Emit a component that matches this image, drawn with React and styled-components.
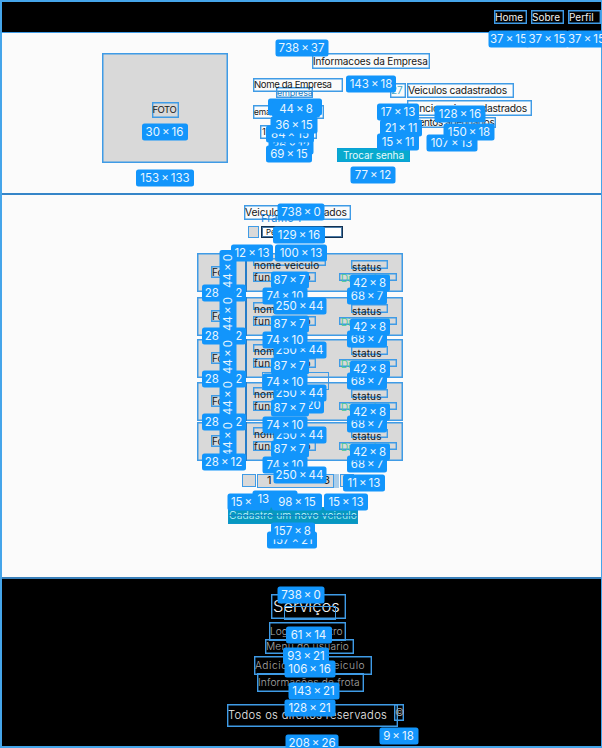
import React from "react";
import styled, { createGlobalStyle } from "styled-components";

const line = "#3f9be6";

const Global = createGlobalStyle`
  * { box-sizing: border-box; }
  body { margin: 0; background: #fbfbfb; font-family: Inter, "Liberation Sans", sans-serif; color: #171717; }
`;

const Page = styled.div`
  position: relative;
  width: 602px;
  height: 748px;
  overflow: hidden;
  background: #fbfbfb;
`;

const PageOutline = styled.div`
  position: absolute;
  inset: 0;
  border: 2px solid #45a5ea;
  border-width: 2px 1.5px 2px 2px;
`;

/* Outlined text layer; $up and $left pull it over its neighbour. */
const Layer = styled.div`
  flex: none;
  width: ${(p) => p.$w}px;
  height: ${(p) => p.$h}px;
  margin-top: ${(p) => p.$up || 0}px;
  margin-left: ${(p) => p.$left || 0}px;
  box-shadow: inset 0 0 0 1.4px ${line};
  padding-left: ${(p) => p.$pad ?? 1}px;
  padding-top: ${(p) => p.$drop || 0}px;
  font-size: ${(p) => p.$size || 10}px;
  font-weight: ${(p) => p.$weight || 400};
  letter-spacing: ${(p) => p.$track || 0}px;
  line-height: ${(p) => p.$h}px;
  white-space: nowrap;
  color: ${(p) => p.$color || "inherit"};
`;

const Nav = styled.nav`
  height: 33px;
  background: #000;
  color: #f2f2f2;
  display: flex;
  justify-content: flex-end;
  gap: 4px;
  padding: 10px 1px 0 0;
  border-bottom: 1px solid ${line};
`;

const Company = styled.section`
  height: 162px;
  display: flex;
  padding: 20px 0 0 102px;
  border-bottom: 2px solid #3585c8;
`;

const Photo = styled.div`
  width: 126px;
  height: 110px;
  background: #d9d9d9;
  box-shadow: inset 0 0 0 1.5px ${line};
  display: flex;
  justify-content: center;
  padding-top: 49px;
`;

const Details = styled.div`
  width: 310px;
  margin-left: 25px;
`;

const Columns = styled.div`
  display: flex;
  height: 79px;
`;

const Column = styled.div`
  width: ${(p) => p.$w}px;
  padding-top: ${(p) => p.$top}px;
`;

const Row = styled.div`
  display: flex;
  gap: 1px;
`;

const PasswordButton = styled.button`
  display: block;
  width: 73px;
  height: 14px;
  margin-left: 84px;
  padding: 0;
  border: 1px solid #0a9fd8;
  background: #08aace;
  color: #e6fbff;
  font: 400 10px/12px Inter, sans-serif;
  letter-spacing: -0.1px;
`;

const Vehicles = styled.section`
  height: 382px;
  display: flex;
  flex-direction: column;
  padding-top: 10px;
`;

const FrameName = styled.span`
  height: 10px;
  margin: -8px 0 0 261px;
  font-size: 11px;
  line-height: 12px;
  color: #2388df;
`;

const Search = styled.div`
  display: flex;
  gap: 2px;
  margin: 4px 0 0 248px;
`;

const Square = styled.span`
  width: ${(p) => p.$w}px;
  height: ${(p) => p.$h}px;
  background: #d9d9d9;
  box-shadow: inset 0 0 0 1px ${line};
`;

const Field = styled.div`
  width: 82px;
  height: 12px;
  border: 1px solid #123152;
  box-shadow: inset 0 0 0 1px #4c7ba6;
  background: #fff;
  padding-left: 4px;
  font-size: 8px;
  line-height: 10px;
`;

const Cards = styled.div`
  display: flex;
  flex-direction: column;
  gap: 4px;
  height: 207px;
  margin: 15px 0 0 197px;
`;

const Card = styled.article`
  flex: none;
  height: 39px;
  margin-top: ${(p) => p.$shift}px;
  display: grid;
  grid-template-columns: 50px 92px 64px;
  width: 206px;
  background: #d9d9d9;
  box-shadow: inset 0 0 0 1.5px ${line};
`;

const Thumb = styled.div`
  border-right: 2px solid #267dc8;
  padding: 13px 0 0 14px;
`;

const Info = styled.div`
  padding: ${(p) => p.$top}px 0 0 ${(p) => p.$left}px;
`;

const Pager = styled.div`
  display: flex;
  gap: 1px;
  margin: 14px 0 0 242px;
`;

const Pages = styled.div`
  width: 82px;
  height: 14px;
  background: #d9d9d9;
  box-shadow: inset 0 0 0 1px ${line};
  border-right: 5px solid #a9cdea;
  display: flex;
  justify-content: space-between;
  padding: 0 4px 0 10px;
  font-size: 11px;
  line-height: 13px;
`;

const AddButton = styled.button`
  width: 130px;
  height: 17px;
  margin: 19px 0 0 228px;
  padding: 0 0 2px;
  border: 1px solid #0d96ca;
  background: #0798bf;
  color: #c8f4ff;
  font: 300 10.3px/12px Inter, sans-serif;
  letter-spacing: 0.15px;
  text-decoration: line-through;
  text-decoration-color: #1681c5;
  white-space: nowrap;
`;

const Footer = styled.footer`
  height: 171px;
  background: #000;
  border-top: 2px solid #397fb9;
  color: #aaa;
  padding-top: 15px;
`;

const Stack = styled.div`
  display: flex;
  flex-direction: column;
`;

const Copyright = styled.div`
  display: flex;
  margin: 12px 0 0 227px;
`;

const Badge = styled.span`
  position: absolute;
  left: ${(p) => p.$x}px;
  top: ${(p) => p.$y}px;
  width: ${(p) => p.$w}px;
  height: 17px;
  transform: translate(-50%, -50%) ${(p) => (p.$turned ? "rotate(-90deg)" : "")};
  border-radius: 2.5px;
  background: #1295fb;
  color: #e8f5ff;
  font-size: 11.5px;
  line-height: 17px;
  word-spacing: -1.2px;
  text-align: center;
  white-space: nowrap;
`;

const Guide = styled.span`
  position: absolute;
  left: ${(p) => p.$x}px;
  top: ${(p) => p.$y}px;
  width: ${(p) => p.$w}px;
  height: ${(p) => p.$h}px;
  border: 1.4px solid ${line};
`;

/* Centre x, centre y, width, size label; later entries lie on top. */
const sizes = [
  [508.5, 39, 41, "37 × 15"],
  [586.5, 39, 41, "37 × 15"],
  [547, 39, 43, "37 × 15"],
  [301.5, 47.5, 53, "738 × 37"],
  [371, 84, 50, "143 × 18"],
  [295, 107, 54, "118 × 15"],
  [296, 109, 48, "44 × 8"],
  [291, 146, 45, "36 × 12"],
  [290, 134, 48, "84 × 15"],
  [294, 124.5, 47, "36 × 15"],
  [289, 153.5, 46, "69 × 15"],
  [398, 111.5, 42, "17 × 13"],
  [401, 127.5, 42, "21 × 11"],
  [398, 141.5, 42, "15 × 11"],
  [460, 113.5, 51, "128 × 16"],
  [451.5, 142.5, 51, "107 × 13"],
  [469, 131.5, 51, "150 × 18"],
  [164.5, 132, 46, "30 × 16"],
  [165, 177.5, 58, "153 × 133"],
  [373, 175, 45, "77 × 12"],
  [301, 212, 47, "738 × 0"],
  [299, 234.5, 52, "129 × 16"],
  [252, 252.5, 42, "12 × 13"],
  [301, 252.5, 52, "100 × 13"],
  [302, 405, 44, "61 × 20"],
  [223.5, 293, 44, "28 × 12"],
  [223.5, 336, 44, "28 × 12"],
  [223.5, 379, 44, "28 × 12"],
  [223.5, 421.5, 44, "28 × 12"],
  [227.5, 271, 42, "44 × 0", true],
  [227.5, 314, 44, "44 × 0", true],
  [227.5, 357, 44, "44 × 0", true],
  [227.5, 398, 44, "44 × 0", true],
  [227.5, 439, 40, "44 × 0", true],
  [223.5, 461.5, 44, "28 × 12"],
  [285, 296, 45, "74 × 10"],
  [299.5, 305.5, 53, "250 × 44"],
  [299.5, 350, 53, "250 × 44"],
  [299.5, 392.5, 53, "250 × 44"],
  [299.5, 434.5, 53, "250 × 44"],
  [285, 340, 45, "74 × 10"],
  [285, 382, 45, "74 × 10"],
  [285, 425, 45, "74 × 10"],
  [285, 465, 45, "74 × 10"],
  [299.5, 475, 53, "250 × 44"],
  [289.5, 280, 38, "87 × 7"],
  [289.5, 323.5, 38, "87 × 7"],
  [289.5, 366, 38, "87 × 7"],
  [289.5, 408, 38, "87 × 7"],
  [289.5, 449, 38, "87 × 7"],
  [367, 296, 40, "68 × 7"],
  [367, 339, 40, "68 × 7"],
  [367, 381, 40, "68 × 7"],
  [367, 423.5, 40, "68 × 7"],
  [367, 464, 40, "68 × 7"],
  [369.5, 283, 40, "42 × 8"],
  [369.5, 327, 40, "42 × 8"],
  [369.5, 369, 40, "42 × 8"],
  [369.5, 411.5, 40, "42 × 8"],
  [369.5, 452, 40, "42 × 8"],
  [364, 483, 42, "11 × 13"],
  [248.5, 501.5, 43, "15 × 13"],
  [275, 498.5, 45, "13 × 13"],
  [346, 501.5, 44, "15 × 13"],
  [297, 502, 50, "98 × 15"],
  [292, 539.5, 50, "157 × 21"],
  [292.5, 530.5, 44, "157 × 8"],
  [301, 594.5, 47, "738 × 0"],
  [308.5, 634.5, 46, "61 × 14"],
  [306, 655.5, 46, "93 × 21"],
  [309.5, 668.5, 51, "106 × 16"],
  [313.5, 690.5, 51, "143 × 21"],
  [309.5, 707.5, 51, "128 × 21"],
  [312, 742.5, 53, "208 × 26"],
  [398.5, 736, 39, "9 × 18"],
];

const cardShifts = [0, 1, -1, 0, -3];

function VehicleCard({ shift }) {
  return (
    <Card $shift={shift}>
      <Thumb><Layer $w={24} $h={12} $size={10}>Foto</Layer></Thumb>
      <Info $top={5} $left={6}>
        <Layer $w={73} $h={8} $drop={3} $size={10} $track={0.2}>nome veiculo</Layer>
        <Layer $w={63} $h={10} $up={6} $size={10} $track={0.3}>funcionario</Layer>
      </Info>
      <Info $top={7} $left={0}>
        <Layer $w={37} $h={9} $left={12} $drop={2.5} $size={10} $track={0.15}>status</Layer>
        <Layer $w={58} $h={8} $up={4} $drop={1} $size={10} $pad={2} $color="#48c995">Disponivel</Layer>
      </Info>
    </Card>
  );
}

export default function App() {
  return (
    <Page>
      <Global />
      <Nav>
        <Layer $w={33} $h={14}>Home</Layer>
        <Layer $w={33} $h={14}>Sobre</Layer>
        <Layer $w={33} $h={14}>Perfil</Layer>
      </Nav>
      <Company>
        <Photo><Layer $w={27} $h={16} $size={9.5} $track={-0.5}>FOTO</Layer></Photo>
        <Details>
          <Layer $w={118} $h={16} $left={59} $size={10} $track={-0.14}>Informacoes da Empresa</Layer>
          <Columns>
            <Column $w={137} $top={9}>
              <Layer $w={90} $h={14} $size={9.6} $track={-0.37}>Nome da Empresa</Layer>
              <Layer $w={37} $h={11} $left={23} $up={-5} $size={9} $track={-0.2} $color="#237fc4">empresa</Layer>
              <Layer $w={71} $h={14} $up={7} $size={8.5} $track={-0.25}>email@empresa</Layer>
              <Layer $w={57} $h={14} $left={7} $up={6} $pad={2} $size={9.5}>11 99999</Layer>
            </Column>
            <Column $w={150} $top={14}>
              <Row>
                <Layer $w={16} $h={15} $size={10} $color="#46a9c8">27</Layer>
                <Layer $w={107} $h={15} $size={10.3} $track={-0.27}>Veiculos cadastrados</Layer>
              </Row>
              <Layer $w={125} $h={16} $left={17} $up={2} $drop={-1} $size={10.3} $track={-0.28}>Funcionarios cadastrados</Layer>
              <Layer $w={89} $h={11} $left={17} $up={1} $size={10} $track={-0.4}>Eventos agendados</Layer>
            </Column>
          </Columns>
          <PasswordButton>Trocar senha</PasswordButton>
        </Details>
      </Company>
      <Vehicles>
        <Layer $w={107} $h={15} $left={244} $size={10.3} $track={-0.12}>Veiculos cadastrados</Layer>
        <FrameName>Frame 1</FrameName>
        <Search><Square $w={11} $h={12} /><Field>Pesquisar</Field></Search>
        <Cards>{cardShifts.map((shift, i) => <VehicleCard key={i} shift={shift} />)}</Cards>
        <Pager>
          <Square $w={14} $h={13} />
          <Pages><span>1</span><span>3</span></Pages>
          <Square $w={14} $h={13} />
        </Pager>
        <AddButton>Cadastre um novo veiculo</AddButton>
      </Vehicles>
      <Footer>
        <Stack>
          <Layer $w={75} $h={25} $left={271} $pad={2} $size={16.5} $weight={300} $color="#f4f4f4">Serviços</Layer>
          <Layer $w={77} $h={19} $left={269} $up={3} $size={10.2} $weight={300}>Login/Cadastro</Layer>
          <Layer $w={89} $h={15} $left={265} $up={-2} $size={10.2} $weight={300} $track={0.2}>Menu do usuario</Layer>
          <Layer $w={118} $h={19} $left={254} $up={2} $size={10.2} $weight={300} $track={0.55}>Adicionar um veiculo</Layer>
          <Layer $w={107} $h={19} $left={257} $up={-2} $size={10.2} $weight={300} $track={0.15}>Informações de frota</Layer>
        </Stack>
        <Copyright>
          <Layer $w={171} $h={23} $size={11.2} $weight={300} $track={0.33} $color="#eee">Todos os direitos reservados</Layer>
          <Layer $w={10} $h={17} $left={-4} $size={10}>©</Layer>
        </Copyright>
      </Footer>
      <Guide $x={262} $y={372} $w={67} $h={18} />
      <Guide $x={284} $y={606} $w={52} $h={14} />
      <PageOutline />
      {sizes.map(([x, y, w, label, turned], i) => (
        <Badge key={i} $x={x} $y={y} $w={w} $turned={turned}>{label}</Badge>
      ))}
    </Page>
  );
}
